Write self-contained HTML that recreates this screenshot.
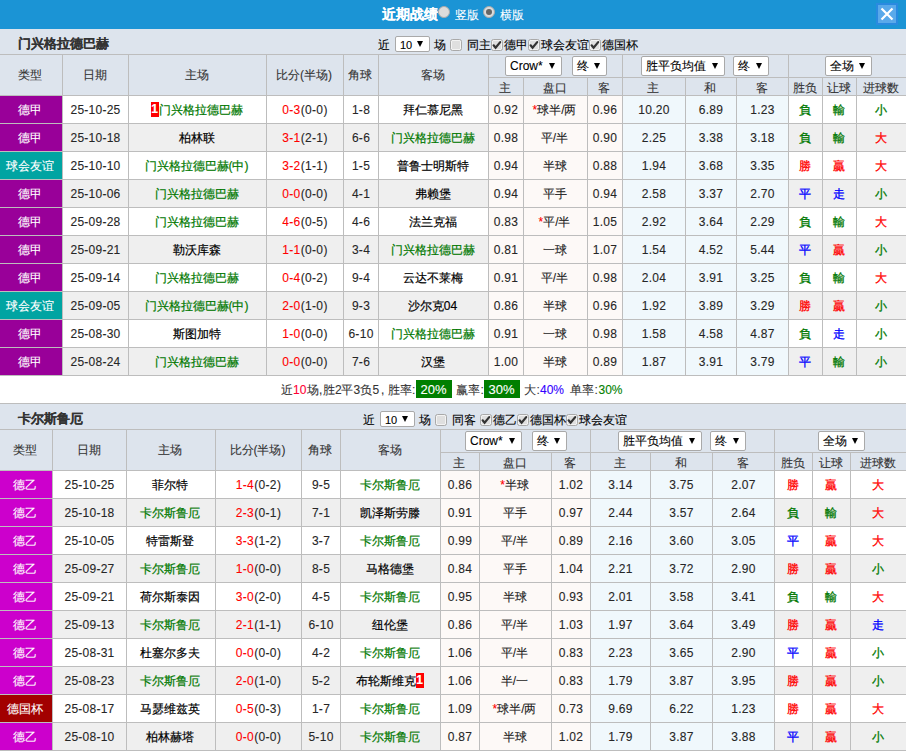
<!DOCTYPE html>
<html><head><meta charset="utf-8"><style>
html,body{margin:0;padding:0;background:#fff;width:906px;height:752px;overflow:hidden}
body{position:relative;font-family:"Liberation Sans",sans-serif;font-size:12px;color:#000;-webkit-text-stroke:0.1px currentColor}
body div{position:absolute;box-sizing:border-box}
.t{text-align:center;white-space:nowrap}
.ct{white-space:nowrap;line-height:14px}
.bd{position:relative;top:-1px;display:inline-block;background:#f00;color:#fff;font-weight:bold;width:8px;height:15px;line-height:15px;text-align:center;vertical-align:middle;font-size:12px}
.sel{position:absolute;background:#fff;border:1px solid #a9a9a9;border-radius:2px;text-align:left;padding-left:4px;white-space:nowrap;color:#000;font-size:12px}
.sel2{position:absolute;background:#fff;border:1px solid #a9a9a9;border-radius:2px;padding-left:4px;white-space:nowrap;color:#000;font-size:12px}
.arr{position:absolute;right:6px;top:50%;margin-top:-3px;width:0;height:0;border-left:3px solid transparent;border-right:3px solid transparent;border-top:6px solid #000}
.cb{width:12px;height:12px;border:1px solid #a9a9a9;border-radius:2.5px;background:#dfdfdf;box-shadow:inset 0 0 0 1px #f3f3f3}
.cb svg{position:absolute;left:-1px;top:-1px}
.rad{width:12px;height:12px;border-radius:50%;background:#dcdcdc;border:1px solid #aaa;box-sizing:border-box}
.dot{left:2px;top:2px;width:6px;height:6px;border-radius:50%;background:#666}
.gb{display:inline-block;background:#007f00;color:#fff;padding:0 4px;line-height:18px;font-size:13px}
</style></head><body>
<div style="left:0px;top:0px;width:906px;height:29px;background:#1b94d5"></div>
<div class="ct" style="left:382px;top:7px;font-size:14px;font-weight:bold;color:#fff">近期战绩</div>
<div class="rad" style="left:438px;top:6px"></div>
<div class="ct" style="left:455px;top:8px;color:#fff">竖版</div>
<div class="rad" style="left:483px;top:6px"><div class="dot"></div></div>
<div class="ct" style="left:500px;top:8px;color:#fff">横版</div>
<div style="left:876px;top:3px;width:22px;height:22px;background:#2a8ae0"></div>
<div style="left:878px;top:5px;width:18px;height:18px;background:#5aa9ea"></div>
<svg style="position:absolute;left:876px;top:3px" width="22" height="22" viewBox="0 0 22 22"><path d="M5.5 5.5 L16.5 16.5 M16.5 5.5 L5.5 16.5" stroke="#fff" stroke-width="2.2"/></svg>
<div style="left:0px;top:29px;width:906px;height:25px;background:#dde4ed"></div>
<div class="t" style="left:18px;top:31px;width:282px;height:25px;line-height:25px;text-align:left;font-weight:bold;font-size:13px;color:#333">门兴格拉德巴赫</div>
<div class="ct" style="left:378px;top:38px">近</div>
<div class="sel2" style="left:395px;top:36px;width:35px;height:16px;line-height:16px;font-size:11px">10<i class="arr"></i></div>
<div class="ct" style="left:433.5px;top:38px">场</div>
<div class="cb" style="left:450px;top:39px"></div>
<div class="ct" style="left:467px;top:38px">同主</div>
<div class="cb" style="left:491px;top:39px"><svg width="12" height="12" viewBox="0 0 12 12"><path d="M2.6 6.3 L4.6 8.7 L9.2 3.1" stroke="#333" stroke-width="2.2" fill="none" stroke-linecap="round"/></svg></div>
<div class="ct" style="left:503.5px;top:38px">德甲</div>
<div class="cb" style="left:528px;top:39px"><svg width="12" height="12" viewBox="0 0 12 12"><path d="M2.6 6.3 L4.6 8.7 L9.2 3.1" stroke="#333" stroke-width="2.2" fill="none" stroke-linecap="round"/></svg></div>
<div class="ct" style="left:540.5px;top:38px">球会友谊</div>
<div class="cb" style="left:589px;top:39px"><svg width="12" height="12" viewBox="0 0 12 12"><path d="M2.6 6.3 L4.6 8.7 L9.2 3.1" stroke="#333" stroke-width="2.2" fill="none" stroke-linecap="round"/></svg></div>
<div class="ct" style="left:601.5px;top:38px">德国杯</div>
<div style="left:0px;top:54px;width:906px;height:41px;background:#dde4ed"></div>
<div style="left:0px;top:95px;width:906px;height:28px;background:#ffffff"></div>
<div style="left:488px;top:95px;width:134px;height:28px;background:#fdf9f7"></div>
<div style="left:622px;top:95px;width:166px;height:28px;background:#f0f8fc"></div>
<div style="left:0px;top:96px;width:62px;height:27px;background:#990099"></div>
<div class="t" style="left:-1px;top:97px;width:62px;height:27px;line-height:27px;color:#fff">德甲</div>
<div class="t" style="left:63px;top:97px;width:65px;height:27px;line-height:27px;color:#262626;letter-spacing:0.25px">25-10-25</div>
<div class="t" style="left:128px;top:97px;width:137px;height:27px;line-height:27px;"><span style="color:#007800;-webkit-text-stroke:0.2px currentColor"><span class="bd">1</span>门兴格拉德巴赫</span></div>
<div class="t" style="left:267px;top:97px;width:76px;height:27px;line-height:27px;letter-spacing:0.35px"><span style="color:#ff0000">0-3</span><span style="color:#262626">(0-0)</span></div>
<div class="t" style="left:344px;top:97px;width:34px;height:27px;line-height:27px;color:#262626;letter-spacing:0.3px">1-8</div>
<div class="t" style="left:378px;top:97px;width:109px;height:27px;line-height:27px;"><span style="color:#000;-webkit-text-stroke:0.2px currentColor">拜仁慕尼黑</span></div>
<div class="t" style="left:489px;top:97px;width:34px;height:27px;line-height:27px;color:#262626;letter-spacing:0.3px">0.92</div>
<div class="t" style="left:523px;top:97px;width:63px;height:27px;line-height:27px;color:#222"><span style="color:#ff0000">*</span>球半/两</div>
<div class="t" style="left:588px;top:97px;width:34px;height:27px;line-height:27px;color:#262626;letter-spacing:0.3px">0.96</div>
<div class="t" style="left:623px;top:97px;width:62px;height:27px;line-height:27px;color:#262626;letter-spacing:0.3px">10.20</div>
<div class="t" style="left:686px;top:97px;width:50px;height:27px;line-height:27px;color:#262626;letter-spacing:0.3px">6.89</div>
<div class="t" style="left:737px;top:97px;width:51px;height:27px;line-height:27px;color:#262626;letter-spacing:0.3px">1.23</div>
<div class="t" style="left:788px;top:97px;width:33px;height:27px;line-height:27px;color:#007800;-webkit-text-stroke:0.3px currentColor">負</div>
<div class="t" style="left:822px;top:97px;width:33px;height:27px;line-height:27px;color:#007800;-webkit-text-stroke:0.3px currentColor">輸</div>
<div class="t" style="left:856px;top:97px;width:49px;height:27px;line-height:27px;color:#007800;-webkit-text-stroke:0.3px currentColor">小</div>
<div style="left:0px;top:123px;width:906px;height:28px;background:#efefef"></div>
<div style="left:488px;top:123px;width:134px;height:28px;background:#fdf9f7"></div>
<div style="left:622px;top:123px;width:166px;height:28px;background:#f0f8fc"></div>
<div style="left:0px;top:124px;width:62px;height:27px;background:#990099"></div>
<div class="t" style="left:-1px;top:125px;width:62px;height:27px;line-height:27px;color:#fff">德甲</div>
<div class="t" style="left:63px;top:125px;width:65px;height:27px;line-height:27px;color:#262626;letter-spacing:0.25px">25-10-18</div>
<div class="t" style="left:128px;top:125px;width:137px;height:27px;line-height:27px;"><span style="color:#000;-webkit-text-stroke:0.2px currentColor">柏林联</span></div>
<div class="t" style="left:267px;top:125px;width:76px;height:27px;line-height:27px;letter-spacing:0.35px"><span style="color:#ff0000">3-1</span><span style="color:#262626">(2-1)</span></div>
<div class="t" style="left:344px;top:125px;width:34px;height:27px;line-height:27px;color:#262626;letter-spacing:0.3px">6-6</div>
<div class="t" style="left:378px;top:125px;width:109px;height:27px;line-height:27px;"><span style="color:#007800;-webkit-text-stroke:0.2px currentColor">门兴格拉德巴赫</span></div>
<div class="t" style="left:489px;top:125px;width:34px;height:27px;line-height:27px;color:#262626;letter-spacing:0.3px">0.98</div>
<div class="t" style="left:523px;top:125px;width:63px;height:27px;line-height:27px;color:#222">平/半</div>
<div class="t" style="left:588px;top:125px;width:34px;height:27px;line-height:27px;color:#262626;letter-spacing:0.3px">0.90</div>
<div class="t" style="left:623px;top:125px;width:62px;height:27px;line-height:27px;color:#262626;letter-spacing:0.3px">2.25</div>
<div class="t" style="left:686px;top:125px;width:50px;height:27px;line-height:27px;color:#262626;letter-spacing:0.3px">3.38</div>
<div class="t" style="left:737px;top:125px;width:51px;height:27px;line-height:27px;color:#262626;letter-spacing:0.3px">3.18</div>
<div class="t" style="left:788px;top:125px;width:33px;height:27px;line-height:27px;color:#007800;-webkit-text-stroke:0.3px currentColor">負</div>
<div class="t" style="left:822px;top:125px;width:33px;height:27px;line-height:27px;color:#007800;-webkit-text-stroke:0.3px currentColor">輸</div>
<div class="t" style="left:856px;top:125px;width:49px;height:27px;line-height:27px;color:#ff0000;-webkit-text-stroke:0.3px currentColor">大</div>
<div style="left:0px;top:151px;width:906px;height:28px;background:#ffffff"></div>
<div style="left:488px;top:151px;width:134px;height:28px;background:#fdf9f7"></div>
<div style="left:622px;top:151px;width:166px;height:28px;background:#f0f8fc"></div>
<div style="left:0px;top:152px;width:62px;height:27px;background:#00a4a2"></div>
<div class="t" style="left:-1px;top:153px;width:62px;height:27px;line-height:27px;color:#fff">球会友谊</div>
<div class="t" style="left:63px;top:153px;width:65px;height:27px;line-height:27px;color:#262626;letter-spacing:0.25px">25-10-10</div>
<div class="t" style="left:128px;top:153px;width:137px;height:27px;line-height:27px;"><span style="color:#007800;-webkit-text-stroke:0.2px currentColor">门兴格拉德巴赫(中)</span></div>
<div class="t" style="left:267px;top:153px;width:76px;height:27px;line-height:27px;letter-spacing:0.35px"><span style="color:#ff0000">3-2</span><span style="color:#262626">(1-1)</span></div>
<div class="t" style="left:344px;top:153px;width:34px;height:27px;line-height:27px;color:#262626;letter-spacing:0.3px">1-5</div>
<div class="t" style="left:378px;top:153px;width:109px;height:27px;line-height:27px;"><span style="color:#000;-webkit-text-stroke:0.2px currentColor">普鲁士明斯特</span></div>
<div class="t" style="left:489px;top:153px;width:34px;height:27px;line-height:27px;color:#262626;letter-spacing:0.3px">0.94</div>
<div class="t" style="left:523px;top:153px;width:63px;height:27px;line-height:27px;color:#222">半球</div>
<div class="t" style="left:588px;top:153px;width:34px;height:27px;line-height:27px;color:#262626;letter-spacing:0.3px">0.88</div>
<div class="t" style="left:623px;top:153px;width:62px;height:27px;line-height:27px;color:#262626;letter-spacing:0.3px">1.94</div>
<div class="t" style="left:686px;top:153px;width:50px;height:27px;line-height:27px;color:#262626;letter-spacing:0.3px">3.68</div>
<div class="t" style="left:737px;top:153px;width:51px;height:27px;line-height:27px;color:#262626;letter-spacing:0.3px">3.35</div>
<div class="t" style="left:788px;top:153px;width:33px;height:27px;line-height:27px;color:#ff0000;-webkit-text-stroke:0.3px currentColor">勝</div>
<div class="t" style="left:822px;top:153px;width:33px;height:27px;line-height:27px;color:#ff0000;-webkit-text-stroke:0.3px currentColor">贏</div>
<div class="t" style="left:856px;top:153px;width:49px;height:27px;line-height:27px;color:#ff0000;-webkit-text-stroke:0.3px currentColor">大</div>
<div style="left:0px;top:179px;width:906px;height:28px;background:#efefef"></div>
<div style="left:488px;top:179px;width:134px;height:28px;background:#fdf9f7"></div>
<div style="left:622px;top:179px;width:166px;height:28px;background:#f0f8fc"></div>
<div style="left:0px;top:180px;width:62px;height:27px;background:#990099"></div>
<div class="t" style="left:-1px;top:181px;width:62px;height:27px;line-height:27px;color:#fff">德甲</div>
<div class="t" style="left:63px;top:181px;width:65px;height:27px;line-height:27px;color:#262626;letter-spacing:0.25px">25-10-06</div>
<div class="t" style="left:128px;top:181px;width:137px;height:27px;line-height:27px;"><span style="color:#007800;-webkit-text-stroke:0.2px currentColor">门兴格拉德巴赫</span></div>
<div class="t" style="left:267px;top:181px;width:76px;height:27px;line-height:27px;letter-spacing:0.35px"><span style="color:#ff0000">0-0</span><span style="color:#262626">(0-0)</span></div>
<div class="t" style="left:344px;top:181px;width:34px;height:27px;line-height:27px;color:#262626;letter-spacing:0.3px">4-1</div>
<div class="t" style="left:378px;top:181px;width:109px;height:27px;line-height:27px;"><span style="color:#000;-webkit-text-stroke:0.2px currentColor">弗赖堡</span></div>
<div class="t" style="left:489px;top:181px;width:34px;height:27px;line-height:27px;color:#262626;letter-spacing:0.3px">0.94</div>
<div class="t" style="left:523px;top:181px;width:63px;height:27px;line-height:27px;color:#222">平手</div>
<div class="t" style="left:588px;top:181px;width:34px;height:27px;line-height:27px;color:#262626;letter-spacing:0.3px">0.94</div>
<div class="t" style="left:623px;top:181px;width:62px;height:27px;line-height:27px;color:#262626;letter-spacing:0.3px">2.58</div>
<div class="t" style="left:686px;top:181px;width:50px;height:27px;line-height:27px;color:#262626;letter-spacing:0.3px">3.37</div>
<div class="t" style="left:737px;top:181px;width:51px;height:27px;line-height:27px;color:#262626;letter-spacing:0.3px">2.70</div>
<div class="t" style="left:788px;top:181px;width:33px;height:27px;line-height:27px;color:#0000ff;-webkit-text-stroke:0.3px currentColor">平</div>
<div class="t" style="left:822px;top:181px;width:33px;height:27px;line-height:27px;color:#0000ff;-webkit-text-stroke:0.3px currentColor">走</div>
<div class="t" style="left:856px;top:181px;width:49px;height:27px;line-height:27px;color:#007800;-webkit-text-stroke:0.3px currentColor">小</div>
<div style="left:0px;top:207px;width:906px;height:28px;background:#ffffff"></div>
<div style="left:488px;top:207px;width:134px;height:28px;background:#fdf9f7"></div>
<div style="left:622px;top:207px;width:166px;height:28px;background:#f0f8fc"></div>
<div style="left:0px;top:208px;width:62px;height:27px;background:#990099"></div>
<div class="t" style="left:-1px;top:209px;width:62px;height:27px;line-height:27px;color:#fff">德甲</div>
<div class="t" style="left:63px;top:209px;width:65px;height:27px;line-height:27px;color:#262626;letter-spacing:0.25px">25-09-28</div>
<div class="t" style="left:128px;top:209px;width:137px;height:27px;line-height:27px;"><span style="color:#007800;-webkit-text-stroke:0.2px currentColor">门兴格拉德巴赫</span></div>
<div class="t" style="left:267px;top:209px;width:76px;height:27px;line-height:27px;letter-spacing:0.35px"><span style="color:#ff0000">4-6</span><span style="color:#262626">(0-5)</span></div>
<div class="t" style="left:344px;top:209px;width:34px;height:27px;line-height:27px;color:#262626;letter-spacing:0.3px">4-6</div>
<div class="t" style="left:378px;top:209px;width:109px;height:27px;line-height:27px;"><span style="color:#000;-webkit-text-stroke:0.2px currentColor">法兰克福</span></div>
<div class="t" style="left:489px;top:209px;width:34px;height:27px;line-height:27px;color:#262626;letter-spacing:0.3px">0.83</div>
<div class="t" style="left:523px;top:209px;width:63px;height:27px;line-height:27px;color:#222"><span style="color:#ff0000">*</span>平/半</div>
<div class="t" style="left:588px;top:209px;width:34px;height:27px;line-height:27px;color:#262626;letter-spacing:0.3px">1.05</div>
<div class="t" style="left:623px;top:209px;width:62px;height:27px;line-height:27px;color:#262626;letter-spacing:0.3px">2.92</div>
<div class="t" style="left:686px;top:209px;width:50px;height:27px;line-height:27px;color:#262626;letter-spacing:0.3px">3.64</div>
<div class="t" style="left:737px;top:209px;width:51px;height:27px;line-height:27px;color:#262626;letter-spacing:0.3px">2.29</div>
<div class="t" style="left:788px;top:209px;width:33px;height:27px;line-height:27px;color:#007800;-webkit-text-stroke:0.3px currentColor">負</div>
<div class="t" style="left:822px;top:209px;width:33px;height:27px;line-height:27px;color:#007800;-webkit-text-stroke:0.3px currentColor">輸</div>
<div class="t" style="left:856px;top:209px;width:49px;height:27px;line-height:27px;color:#ff0000;-webkit-text-stroke:0.3px currentColor">大</div>
<div style="left:0px;top:235px;width:906px;height:28px;background:#efefef"></div>
<div style="left:488px;top:235px;width:134px;height:28px;background:#fdf9f7"></div>
<div style="left:622px;top:235px;width:166px;height:28px;background:#f0f8fc"></div>
<div style="left:0px;top:236px;width:62px;height:27px;background:#990099"></div>
<div class="t" style="left:-1px;top:237px;width:62px;height:27px;line-height:27px;color:#fff">德甲</div>
<div class="t" style="left:63px;top:237px;width:65px;height:27px;line-height:27px;color:#262626;letter-spacing:0.25px">25-09-21</div>
<div class="t" style="left:128px;top:237px;width:137px;height:27px;line-height:27px;"><span style="color:#000;-webkit-text-stroke:0.2px currentColor">勒沃库森</span></div>
<div class="t" style="left:267px;top:237px;width:76px;height:27px;line-height:27px;letter-spacing:0.35px"><span style="color:#ff0000">1-1</span><span style="color:#262626">(0-0)</span></div>
<div class="t" style="left:344px;top:237px;width:34px;height:27px;line-height:27px;color:#262626;letter-spacing:0.3px">3-4</div>
<div class="t" style="left:378px;top:237px;width:109px;height:27px;line-height:27px;"><span style="color:#007800;-webkit-text-stroke:0.2px currentColor">门兴格拉德巴赫</span></div>
<div class="t" style="left:489px;top:237px;width:34px;height:27px;line-height:27px;color:#262626;letter-spacing:0.3px">0.81</div>
<div class="t" style="left:523px;top:237px;width:63px;height:27px;line-height:27px;color:#222">一球</div>
<div class="t" style="left:588px;top:237px;width:34px;height:27px;line-height:27px;color:#262626;letter-spacing:0.3px">1.07</div>
<div class="t" style="left:623px;top:237px;width:62px;height:27px;line-height:27px;color:#262626;letter-spacing:0.3px">1.54</div>
<div class="t" style="left:686px;top:237px;width:50px;height:27px;line-height:27px;color:#262626;letter-spacing:0.3px">4.52</div>
<div class="t" style="left:737px;top:237px;width:51px;height:27px;line-height:27px;color:#262626;letter-spacing:0.3px">5.44</div>
<div class="t" style="left:788px;top:237px;width:33px;height:27px;line-height:27px;color:#0000ff;-webkit-text-stroke:0.3px currentColor">平</div>
<div class="t" style="left:822px;top:237px;width:33px;height:27px;line-height:27px;color:#ff0000;-webkit-text-stroke:0.3px currentColor">贏</div>
<div class="t" style="left:856px;top:237px;width:49px;height:27px;line-height:27px;color:#007800;-webkit-text-stroke:0.3px currentColor">小</div>
<div style="left:0px;top:263px;width:906px;height:28px;background:#ffffff"></div>
<div style="left:488px;top:263px;width:134px;height:28px;background:#fdf9f7"></div>
<div style="left:622px;top:263px;width:166px;height:28px;background:#f0f8fc"></div>
<div style="left:0px;top:264px;width:62px;height:27px;background:#990099"></div>
<div class="t" style="left:-1px;top:265px;width:62px;height:27px;line-height:27px;color:#fff">德甲</div>
<div class="t" style="left:63px;top:265px;width:65px;height:27px;line-height:27px;color:#262626;letter-spacing:0.25px">25-09-14</div>
<div class="t" style="left:128px;top:265px;width:137px;height:27px;line-height:27px;"><span style="color:#007800;-webkit-text-stroke:0.2px currentColor">门兴格拉德巴赫</span></div>
<div class="t" style="left:267px;top:265px;width:76px;height:27px;line-height:27px;letter-spacing:0.35px"><span style="color:#ff0000">0-4</span><span style="color:#262626">(0-2)</span></div>
<div class="t" style="left:344px;top:265px;width:34px;height:27px;line-height:27px;color:#262626;letter-spacing:0.3px">9-4</div>
<div class="t" style="left:378px;top:265px;width:109px;height:27px;line-height:27px;"><span style="color:#000;-webkit-text-stroke:0.2px currentColor">云达不莱梅</span></div>
<div class="t" style="left:489px;top:265px;width:34px;height:27px;line-height:27px;color:#262626;letter-spacing:0.3px">0.91</div>
<div class="t" style="left:523px;top:265px;width:63px;height:27px;line-height:27px;color:#222">平/半</div>
<div class="t" style="left:588px;top:265px;width:34px;height:27px;line-height:27px;color:#262626;letter-spacing:0.3px">0.98</div>
<div class="t" style="left:623px;top:265px;width:62px;height:27px;line-height:27px;color:#262626;letter-spacing:0.3px">2.04</div>
<div class="t" style="left:686px;top:265px;width:50px;height:27px;line-height:27px;color:#262626;letter-spacing:0.3px">3.91</div>
<div class="t" style="left:737px;top:265px;width:51px;height:27px;line-height:27px;color:#262626;letter-spacing:0.3px">3.25</div>
<div class="t" style="left:788px;top:265px;width:33px;height:27px;line-height:27px;color:#007800;-webkit-text-stroke:0.3px currentColor">負</div>
<div class="t" style="left:822px;top:265px;width:33px;height:27px;line-height:27px;color:#007800;-webkit-text-stroke:0.3px currentColor">輸</div>
<div class="t" style="left:856px;top:265px;width:49px;height:27px;line-height:27px;color:#ff0000;-webkit-text-stroke:0.3px currentColor">大</div>
<div style="left:0px;top:291px;width:906px;height:28px;background:#efefef"></div>
<div style="left:488px;top:291px;width:134px;height:28px;background:#fdf9f7"></div>
<div style="left:622px;top:291px;width:166px;height:28px;background:#f0f8fc"></div>
<div style="left:0px;top:292px;width:62px;height:27px;background:#00a4a2"></div>
<div class="t" style="left:-1px;top:293px;width:62px;height:27px;line-height:27px;color:#fff">球会友谊</div>
<div class="t" style="left:63px;top:293px;width:65px;height:27px;line-height:27px;color:#262626;letter-spacing:0.25px">25-09-05</div>
<div class="t" style="left:128px;top:293px;width:137px;height:27px;line-height:27px;"><span style="color:#007800;-webkit-text-stroke:0.2px currentColor">门兴格拉德巴赫(中)</span></div>
<div class="t" style="left:267px;top:293px;width:76px;height:27px;line-height:27px;letter-spacing:0.35px"><span style="color:#ff0000">2-0</span><span style="color:#262626">(1-0)</span></div>
<div class="t" style="left:344px;top:293px;width:34px;height:27px;line-height:27px;color:#262626;letter-spacing:0.3px">9-3</div>
<div class="t" style="left:378px;top:293px;width:109px;height:27px;line-height:27px;"><span style="color:#000;-webkit-text-stroke:0.2px currentColor">沙尔克04</span></div>
<div class="t" style="left:489px;top:293px;width:34px;height:27px;line-height:27px;color:#262626;letter-spacing:0.3px">0.86</div>
<div class="t" style="left:523px;top:293px;width:63px;height:27px;line-height:27px;color:#222">半球</div>
<div class="t" style="left:588px;top:293px;width:34px;height:27px;line-height:27px;color:#262626;letter-spacing:0.3px">0.96</div>
<div class="t" style="left:623px;top:293px;width:62px;height:27px;line-height:27px;color:#262626;letter-spacing:0.3px">1.92</div>
<div class="t" style="left:686px;top:293px;width:50px;height:27px;line-height:27px;color:#262626;letter-spacing:0.3px">3.89</div>
<div class="t" style="left:737px;top:293px;width:51px;height:27px;line-height:27px;color:#262626;letter-spacing:0.3px">3.29</div>
<div class="t" style="left:788px;top:293px;width:33px;height:27px;line-height:27px;color:#ff0000;-webkit-text-stroke:0.3px currentColor">勝</div>
<div class="t" style="left:822px;top:293px;width:33px;height:27px;line-height:27px;color:#ff0000;-webkit-text-stroke:0.3px currentColor">贏</div>
<div class="t" style="left:856px;top:293px;width:49px;height:27px;line-height:27px;color:#007800;-webkit-text-stroke:0.3px currentColor">小</div>
<div style="left:0px;top:319px;width:906px;height:28px;background:#ffffff"></div>
<div style="left:488px;top:319px;width:134px;height:28px;background:#fdf9f7"></div>
<div style="left:622px;top:319px;width:166px;height:28px;background:#f0f8fc"></div>
<div style="left:0px;top:320px;width:62px;height:27px;background:#990099"></div>
<div class="t" style="left:-1px;top:321px;width:62px;height:27px;line-height:27px;color:#fff">德甲</div>
<div class="t" style="left:63px;top:321px;width:65px;height:27px;line-height:27px;color:#262626;letter-spacing:0.25px">25-08-30</div>
<div class="t" style="left:128px;top:321px;width:137px;height:27px;line-height:27px;"><span style="color:#000;-webkit-text-stroke:0.2px currentColor">斯图加特</span></div>
<div class="t" style="left:267px;top:321px;width:76px;height:27px;line-height:27px;letter-spacing:0.35px"><span style="color:#ff0000">1-0</span><span style="color:#262626">(0-0)</span></div>
<div class="t" style="left:344px;top:321px;width:34px;height:27px;line-height:27px;color:#262626;letter-spacing:0.3px">6-10</div>
<div class="t" style="left:378px;top:321px;width:109px;height:27px;line-height:27px;"><span style="color:#007800;-webkit-text-stroke:0.2px currentColor">门兴格拉德巴赫</span></div>
<div class="t" style="left:489px;top:321px;width:34px;height:27px;line-height:27px;color:#262626;letter-spacing:0.3px">0.91</div>
<div class="t" style="left:523px;top:321px;width:63px;height:27px;line-height:27px;color:#222">一球</div>
<div class="t" style="left:588px;top:321px;width:34px;height:27px;line-height:27px;color:#262626;letter-spacing:0.3px">0.98</div>
<div class="t" style="left:623px;top:321px;width:62px;height:27px;line-height:27px;color:#262626;letter-spacing:0.3px">1.58</div>
<div class="t" style="left:686px;top:321px;width:50px;height:27px;line-height:27px;color:#262626;letter-spacing:0.3px">4.58</div>
<div class="t" style="left:737px;top:321px;width:51px;height:27px;line-height:27px;color:#262626;letter-spacing:0.3px">4.87</div>
<div class="t" style="left:788px;top:321px;width:33px;height:27px;line-height:27px;color:#007800;-webkit-text-stroke:0.3px currentColor">負</div>
<div class="t" style="left:822px;top:321px;width:33px;height:27px;line-height:27px;color:#0000ff;-webkit-text-stroke:0.3px currentColor">走</div>
<div class="t" style="left:856px;top:321px;width:49px;height:27px;line-height:27px;color:#007800;-webkit-text-stroke:0.3px currentColor">小</div>
<div style="left:0px;top:347px;width:906px;height:28px;background:#efefef"></div>
<div style="left:488px;top:347px;width:134px;height:28px;background:#fdf9f7"></div>
<div style="left:622px;top:347px;width:166px;height:28px;background:#f0f8fc"></div>
<div style="left:0px;top:348px;width:62px;height:27px;background:#990099"></div>
<div class="t" style="left:-1px;top:349px;width:62px;height:27px;line-height:27px;color:#fff">德甲</div>
<div class="t" style="left:63px;top:349px;width:65px;height:27px;line-height:27px;color:#262626;letter-spacing:0.25px">25-08-24</div>
<div class="t" style="left:128px;top:349px;width:137px;height:27px;line-height:27px;"><span style="color:#007800;-webkit-text-stroke:0.2px currentColor">门兴格拉德巴赫</span></div>
<div class="t" style="left:267px;top:349px;width:76px;height:27px;line-height:27px;letter-spacing:0.35px"><span style="color:#ff0000">0-0</span><span style="color:#262626">(0-0)</span></div>
<div class="t" style="left:344px;top:349px;width:34px;height:27px;line-height:27px;color:#262626;letter-spacing:0.3px">7-6</div>
<div class="t" style="left:378px;top:349px;width:109px;height:27px;line-height:27px;"><span style="color:#000;-webkit-text-stroke:0.2px currentColor">汉堡</span></div>
<div class="t" style="left:489px;top:349px;width:34px;height:27px;line-height:27px;color:#262626;letter-spacing:0.3px">1.00</div>
<div class="t" style="left:523px;top:349px;width:63px;height:27px;line-height:27px;color:#222">半球</div>
<div class="t" style="left:588px;top:349px;width:34px;height:27px;line-height:27px;color:#262626;letter-spacing:0.3px">0.89</div>
<div class="t" style="left:623px;top:349px;width:62px;height:27px;line-height:27px;color:#262626;letter-spacing:0.3px">1.87</div>
<div class="t" style="left:686px;top:349px;width:50px;height:27px;line-height:27px;color:#262626;letter-spacing:0.3px">3.91</div>
<div class="t" style="left:737px;top:349px;width:51px;height:27px;line-height:27px;color:#262626;letter-spacing:0.3px">3.79</div>
<div class="t" style="left:788px;top:349px;width:33px;height:27px;line-height:27px;color:#0000ff;-webkit-text-stroke:0.3px currentColor">平</div>
<div class="t" style="left:822px;top:349px;width:33px;height:27px;line-height:27px;color:#007800;-webkit-text-stroke:0.3px currentColor">輸</div>
<div class="t" style="left:856px;top:349px;width:49px;height:27px;line-height:27px;color:#007800;-webkit-text-stroke:0.3px currentColor">小</div>
<div class="t" style="left:-1px;top:55px;width:62px;height:40px;line-height:40px;color:#333">类型</div>
<div class="t" style="left:62px;top:55px;width:65px;height:40px;line-height:40px;color:#333">日期</div>
<div class="t" style="left:128px;top:55px;width:137px;height:40px;line-height:40px;color:#333">主场</div>
<div class="t" style="left:266px;top:55px;width:76px;height:40px;line-height:40px;color:#333">比分(半场)</div>
<div class="t" style="left:343px;top:55px;width:34px;height:40px;line-height:40px;color:#333">角球</div>
<div class="t" style="left:378px;top:55px;width:109px;height:40px;line-height:40px;color:#333">客场</div>
<div class="t" style="left:488px;top:80px;width:34px;height:17px;line-height:17px;color:#333">主</div>
<div class="t" style="left:523px;top:80px;width:63px;height:17px;line-height:17px;color:#333">盘口</div>
<div class="t" style="left:587px;top:80px;width:34px;height:17px;line-height:17px;color:#333">客</div>
<div class="t" style="left:622px;top:80px;width:62px;height:17px;line-height:17px;color:#333">主</div>
<div class="t" style="left:685px;top:80px;width:50px;height:17px;line-height:17px;color:#333">和</div>
<div class="t" style="left:736px;top:80px;width:51px;height:17px;line-height:17px;color:#333">客</div>
<div class="t" style="left:788px;top:80px;width:33px;height:17px;line-height:17px;color:#333">胜负</div>
<div class="t" style="left:822px;top:80px;width:33px;height:17px;line-height:17px;color:#333">让球</div>
<div class="t" style="left:856px;top:80px;width:49px;height:17px;line-height:17px;color:#333">进球数</div>
<div class="sel" style="left:505px;top:56px;width:57px;height:20px;line-height:18px">Crow*<i class="arr"></i></div>
<div class="sel" style="left:572px;top:56px;width:35px;height:20px;line-height:18px">终<i class="arr"></i></div>
<div class="sel" style="left:641px;top:56px;width:84px;height:20px;line-height:18px">胜平负均值<i class="arr"></i></div>
<div class="sel" style="left:733px;top:56px;width:36px;height:20px;line-height:18px">终<i class="arr"></i></div>
<div class="sel" style="left:825px;top:56px;width:47px;height:20px;line-height:18px">全场<i class="arr"></i></div>
<div style="left:0px;top:54px;width:906px;height:1px;background:#bdbdbd"></div>
<div style="left:0px;top:95px;width:906px;height:1px;background:#bdbdbd"></div>
<div style="left:488px;top:77px;width:418px;height:1px;background:#bdbdbd"></div>
<div style="left:0px;top:123px;width:906px;height:1px;background:#bdbdbd"></div>
<div style="left:0px;top:151px;width:906px;height:1px;background:#bdbdbd"></div>
<div style="left:0px;top:179px;width:906px;height:1px;background:#bdbdbd"></div>
<div style="left:0px;top:207px;width:906px;height:1px;background:#bdbdbd"></div>
<div style="left:0px;top:235px;width:906px;height:1px;background:#bdbdbd"></div>
<div style="left:0px;top:263px;width:906px;height:1px;background:#bdbdbd"></div>
<div style="left:0px;top:291px;width:906px;height:1px;background:#bdbdbd"></div>
<div style="left:0px;top:319px;width:906px;height:1px;background:#bdbdbd"></div>
<div style="left:0px;top:347px;width:906px;height:1px;background:#bdbdbd"></div>
<div style="left:0px;top:375px;width:906px;height:1px;background:#bdbdbd"></div>
<div style="left:62px;top:54px;width:1px;height:322px;background:#bdbdbd"></div>
<div style="left:128px;top:54px;width:1px;height:322px;background:#bdbdbd"></div>
<div style="left:266px;top:54px;width:1px;height:322px;background:#bdbdbd"></div>
<div style="left:343px;top:54px;width:1px;height:322px;background:#bdbdbd"></div>
<div style="left:378px;top:54px;width:1px;height:322px;background:#bdbdbd"></div>
<div style="left:488px;top:54px;width:1px;height:322px;background:#bdbdbd"></div>
<div style="left:622px;top:54px;width:1px;height:322px;background:#bdbdbd"></div>
<div style="left:788px;top:54px;width:1px;height:322px;background:#bdbdbd"></div>
<div style="left:523px;top:77px;width:1px;height:299px;background:#bdbdbd"></div>
<div style="left:587px;top:77px;width:1px;height:299px;background:#bdbdbd"></div>
<div style="left:685px;top:77px;width:1px;height:299px;background:#bdbdbd"></div>
<div style="left:736px;top:77px;width:1px;height:299px;background:#bdbdbd"></div>
<div style="left:822px;top:77px;width:1px;height:299px;background:#bdbdbd"></div>
<div style="left:856px;top:77px;width:1px;height:299px;background:#bdbdbd"></div>
<div class="ct" style="left:280.5px;top:383px;color:#333">近</div>
<div class="ct" style="left:293px;top:383px;color:#ff0033">10</div>
<div class="ct" style="left:306.5px;top:383px;color:#333">场</div>
<div class="ct" style="left:319px;top:383px;color:#333">,</div>
<div class="ct" style="left:322.5px;top:383px;color:#333">胜</div>
<div class="ct" style="left:335px;top:383px;color:#333">2</div>
<div class="ct" style="left:341px;top:383px;color:#333">平</div>
<div class="ct" style="left:353.5px;top:383px;color:#333">3</div>
<div class="ct" style="left:359.5px;top:383px;color:#333">负</div>
<div class="ct" style="left:372.5px;top:383px;color:#333">5</div>
<div class="ct" style="left:381px;top:383px;color:#333">,</div>
<div class="ct" style="left:387.5px;top:383px;color:#333">胜率</div>
<div class="ct" style="left:412px;top:383px;color:#333">:</div>
<div style="left:416px;top:380px;width:36px;height:18px;background:#007f00"></div>
<div style="left:484px;top:380px;width:36px;height:18px;background:#007f00"></div>
<div class="ct" style="left:420.5px;top:383px;color:#fff"><span style="font-size:13px">20%</span></div>
<div class="ct" style="left:455.5px;top:383px;color:#333">赢率</div>
<div class="ct" style="left:480.5px;top:383px;color:#333">:</div>
<div class="ct" style="left:488.5px;top:383px;color:#fff"><span style="font-size:13px">30%</span></div>
<div class="ct" style="left:523.5px;top:383px;color:#333">大</div>
<div class="ct" style="left:536.5px;top:383px;color:#333">:</div>
<div class="ct" style="left:540px;top:383px;color:#3300ff">40%</div>
<div class="ct" style="left:569.5px;top:383px;color:#333">单率</div>
<div class="ct" style="left:594.5px;top:383px;color:#333">:</div>
<div class="ct" style="left:598.5px;top:383px;color:#008000">30%</div>
<div style="left:0px;top:403px;width:906px;height:1px;background:#bdbdbd"></div>
<div style="left:0px;top:404px;width:906px;height:25px;background:#dde4ed"></div>
<div class="t" style="left:18px;top:406px;width:282px;height:25px;line-height:25px;text-align:left;font-weight:bold;font-size:13px;color:#333">卡尔斯鲁厄</div>
<div class="ct" style="left:363px;top:413px">近</div>
<div class="sel2" style="left:380px;top:411px;width:35px;height:16px;line-height:16px;font-size:11px">10<i class="arr"></i></div>
<div class="ct" style="left:418.5px;top:413px">场</div>
<div class="cb" style="left:435px;top:414px"></div>
<div class="ct" style="left:452px;top:413px">同客</div>
<div class="cb" style="left:480px;top:414px"><svg width="12" height="12" viewBox="0 0 12 12"><path d="M2.6 6.3 L4.6 8.7 L9.2 3.1" stroke="#333" stroke-width="2.2" fill="none" stroke-linecap="round"/></svg></div>
<div class="ct" style="left:492.5px;top:413px">德乙</div>
<div class="cb" style="left:517px;top:414px"><svg width="12" height="12" viewBox="0 0 12 12"><path d="M2.6 6.3 L4.6 8.7 L9.2 3.1" stroke="#333" stroke-width="2.2" fill="none" stroke-linecap="round"/></svg></div>
<div class="ct" style="left:529.75px;top:413px">德国杯</div>
<div class="cb" style="left:566px;top:414px"><svg width="12" height="12" viewBox="0 0 12 12"><path d="M2.6 6.3 L4.6 8.7 L9.2 3.1" stroke="#333" stroke-width="2.2" fill="none" stroke-linecap="round"/></svg></div>
<div class="ct" style="left:578.5px;top:413px">球会友谊</div>
<div style="left:0px;top:429px;width:906px;height:41px;background:#dde4ed"></div>
<div style="left:0px;top:470px;width:906px;height:28px;background:#ffffff"></div>
<div style="left:440px;top:470px;width:150px;height:28px;background:#fdf9f7"></div>
<div style="left:590px;top:470px;width:184px;height:28px;background:#f0f8fc"></div>
<div style="left:0px;top:471px;width:52px;height:27px;background:#cc00cc"></div>
<div class="t" style="left:-1px;top:472px;width:52px;height:27px;line-height:27px;color:#fff">德乙</div>
<div class="t" style="left:53px;top:472px;width:73px;height:27px;line-height:27px;color:#262626;letter-spacing:0.25px">25-10-25</div>
<div class="t" style="left:126px;top:472px;width:88px;height:27px;line-height:27px;"><span style="color:#000;-webkit-text-stroke:0.2px currentColor">菲尔特</span></div>
<div class="t" style="left:216px;top:472px;width:85px;height:27px;line-height:27px;letter-spacing:0.35px"><span style="color:#ff0000">1-4</span><span style="color:#262626">(0-2)</span></div>
<div class="t" style="left:302px;top:472px;width:38px;height:27px;line-height:27px;color:#262626;letter-spacing:0.3px">9-5</div>
<div class="t" style="left:340px;top:472px;width:99px;height:27px;line-height:27px;"><span style="color:#007800;-webkit-text-stroke:0.2px currentColor">卡尔斯鲁厄</span></div>
<div class="t" style="left:441px;top:472px;width:38px;height:27px;line-height:27px;color:#262626;letter-spacing:0.3px">0.86</div>
<div class="t" style="left:479px;top:472px;width:71px;height:27px;line-height:27px;color:#222"><span style="color:#ff0000">*</span>半球</div>
<div class="t" style="left:552px;top:472px;width:38px;height:27px;line-height:27px;color:#262626;letter-spacing:0.3px">1.02</div>
<div class="t" style="left:591px;top:472px;width:59px;height:27px;line-height:27px;color:#262626;letter-spacing:0.3px">3.14</div>
<div class="t" style="left:651px;top:472px;width:61px;height:27px;line-height:27px;color:#262626;letter-spacing:0.3px">3.75</div>
<div class="t" style="left:713px;top:472px;width:61px;height:27px;line-height:27px;color:#262626;letter-spacing:0.3px">2.07</div>
<div class="t" style="left:774px;top:472px;width:37px;height:27px;line-height:27px;color:#ff0000;-webkit-text-stroke:0.3px currentColor">勝</div>
<div class="t" style="left:812px;top:472px;width:37px;height:27px;line-height:27px;color:#ff0000;-webkit-text-stroke:0.3px currentColor">贏</div>
<div class="t" style="left:850px;top:472px;width:55px;height:27px;line-height:27px;color:#ff0000;-webkit-text-stroke:0.3px currentColor">大</div>
<div style="left:0px;top:498px;width:906px;height:28px;background:#efefef"></div>
<div style="left:440px;top:498px;width:150px;height:28px;background:#fdf9f7"></div>
<div style="left:590px;top:498px;width:184px;height:28px;background:#f0f8fc"></div>
<div style="left:0px;top:499px;width:52px;height:27px;background:#cc00cc"></div>
<div class="t" style="left:-1px;top:500px;width:52px;height:27px;line-height:27px;color:#fff">德乙</div>
<div class="t" style="left:53px;top:500px;width:73px;height:27px;line-height:27px;color:#262626;letter-spacing:0.25px">25-10-18</div>
<div class="t" style="left:126px;top:500px;width:88px;height:27px;line-height:27px;"><span style="color:#007800;-webkit-text-stroke:0.2px currentColor">卡尔斯鲁厄</span></div>
<div class="t" style="left:216px;top:500px;width:85px;height:27px;line-height:27px;letter-spacing:0.35px"><span style="color:#ff0000">2-3</span><span style="color:#262626">(0-1)</span></div>
<div class="t" style="left:302px;top:500px;width:38px;height:27px;line-height:27px;color:#262626;letter-spacing:0.3px">7-1</div>
<div class="t" style="left:340px;top:500px;width:99px;height:27px;line-height:27px;"><span style="color:#000;-webkit-text-stroke:0.2px currentColor">凯泽斯劳滕</span></div>
<div class="t" style="left:441px;top:500px;width:38px;height:27px;line-height:27px;color:#262626;letter-spacing:0.3px">0.91</div>
<div class="t" style="left:479px;top:500px;width:71px;height:27px;line-height:27px;color:#222">平手</div>
<div class="t" style="left:552px;top:500px;width:38px;height:27px;line-height:27px;color:#262626;letter-spacing:0.3px">0.97</div>
<div class="t" style="left:591px;top:500px;width:59px;height:27px;line-height:27px;color:#262626;letter-spacing:0.3px">2.44</div>
<div class="t" style="left:651px;top:500px;width:61px;height:27px;line-height:27px;color:#262626;letter-spacing:0.3px">3.57</div>
<div class="t" style="left:713px;top:500px;width:61px;height:27px;line-height:27px;color:#262626;letter-spacing:0.3px">2.64</div>
<div class="t" style="left:774px;top:500px;width:37px;height:27px;line-height:27px;color:#007800;-webkit-text-stroke:0.3px currentColor">負</div>
<div class="t" style="left:812px;top:500px;width:37px;height:27px;line-height:27px;color:#007800;-webkit-text-stroke:0.3px currentColor">輸</div>
<div class="t" style="left:850px;top:500px;width:55px;height:27px;line-height:27px;color:#ff0000;-webkit-text-stroke:0.3px currentColor">大</div>
<div style="left:0px;top:526px;width:906px;height:28px;background:#ffffff"></div>
<div style="left:440px;top:526px;width:150px;height:28px;background:#fdf9f7"></div>
<div style="left:590px;top:526px;width:184px;height:28px;background:#f0f8fc"></div>
<div style="left:0px;top:527px;width:52px;height:27px;background:#cc00cc"></div>
<div class="t" style="left:-1px;top:528px;width:52px;height:27px;line-height:27px;color:#fff">德乙</div>
<div class="t" style="left:53px;top:528px;width:73px;height:27px;line-height:27px;color:#262626;letter-spacing:0.25px">25-10-05</div>
<div class="t" style="left:126px;top:528px;width:88px;height:27px;line-height:27px;"><span style="color:#000;-webkit-text-stroke:0.2px currentColor">特雷斯登</span></div>
<div class="t" style="left:216px;top:528px;width:85px;height:27px;line-height:27px;letter-spacing:0.35px"><span style="color:#ff0000">3-3</span><span style="color:#262626">(1-2)</span></div>
<div class="t" style="left:302px;top:528px;width:38px;height:27px;line-height:27px;color:#262626;letter-spacing:0.3px">3-7</div>
<div class="t" style="left:340px;top:528px;width:99px;height:27px;line-height:27px;"><span style="color:#007800;-webkit-text-stroke:0.2px currentColor">卡尔斯鲁厄</span></div>
<div class="t" style="left:441px;top:528px;width:38px;height:27px;line-height:27px;color:#262626;letter-spacing:0.3px">0.99</div>
<div class="t" style="left:479px;top:528px;width:71px;height:27px;line-height:27px;color:#222">平/半</div>
<div class="t" style="left:552px;top:528px;width:38px;height:27px;line-height:27px;color:#262626;letter-spacing:0.3px">0.89</div>
<div class="t" style="left:591px;top:528px;width:59px;height:27px;line-height:27px;color:#262626;letter-spacing:0.3px">2.16</div>
<div class="t" style="left:651px;top:528px;width:61px;height:27px;line-height:27px;color:#262626;letter-spacing:0.3px">3.60</div>
<div class="t" style="left:713px;top:528px;width:61px;height:27px;line-height:27px;color:#262626;letter-spacing:0.3px">3.05</div>
<div class="t" style="left:774px;top:528px;width:37px;height:27px;line-height:27px;color:#0000ff;-webkit-text-stroke:0.3px currentColor">平</div>
<div class="t" style="left:812px;top:528px;width:37px;height:27px;line-height:27px;color:#ff0000;-webkit-text-stroke:0.3px currentColor">贏</div>
<div class="t" style="left:850px;top:528px;width:55px;height:27px;line-height:27px;color:#ff0000;-webkit-text-stroke:0.3px currentColor">大</div>
<div style="left:0px;top:554px;width:906px;height:28px;background:#efefef"></div>
<div style="left:440px;top:554px;width:150px;height:28px;background:#fdf9f7"></div>
<div style="left:590px;top:554px;width:184px;height:28px;background:#f0f8fc"></div>
<div style="left:0px;top:555px;width:52px;height:27px;background:#cc00cc"></div>
<div class="t" style="left:-1px;top:556px;width:52px;height:27px;line-height:27px;color:#fff">德乙</div>
<div class="t" style="left:53px;top:556px;width:73px;height:27px;line-height:27px;color:#262626;letter-spacing:0.25px">25-09-27</div>
<div class="t" style="left:126px;top:556px;width:88px;height:27px;line-height:27px;"><span style="color:#007800;-webkit-text-stroke:0.2px currentColor">卡尔斯鲁厄</span></div>
<div class="t" style="left:216px;top:556px;width:85px;height:27px;line-height:27px;letter-spacing:0.35px"><span style="color:#ff0000">1-0</span><span style="color:#262626">(0-0)</span></div>
<div class="t" style="left:302px;top:556px;width:38px;height:27px;line-height:27px;color:#262626;letter-spacing:0.3px">8-5</div>
<div class="t" style="left:340px;top:556px;width:99px;height:27px;line-height:27px;"><span style="color:#000;-webkit-text-stroke:0.2px currentColor">马格德堡</span></div>
<div class="t" style="left:441px;top:556px;width:38px;height:27px;line-height:27px;color:#262626;letter-spacing:0.3px">0.84</div>
<div class="t" style="left:479px;top:556px;width:71px;height:27px;line-height:27px;color:#222">平手</div>
<div class="t" style="left:552px;top:556px;width:38px;height:27px;line-height:27px;color:#262626;letter-spacing:0.3px">1.04</div>
<div class="t" style="left:591px;top:556px;width:59px;height:27px;line-height:27px;color:#262626;letter-spacing:0.3px">2.21</div>
<div class="t" style="left:651px;top:556px;width:61px;height:27px;line-height:27px;color:#262626;letter-spacing:0.3px">3.72</div>
<div class="t" style="left:713px;top:556px;width:61px;height:27px;line-height:27px;color:#262626;letter-spacing:0.3px">2.90</div>
<div class="t" style="left:774px;top:556px;width:37px;height:27px;line-height:27px;color:#ff0000;-webkit-text-stroke:0.3px currentColor">勝</div>
<div class="t" style="left:812px;top:556px;width:37px;height:27px;line-height:27px;color:#ff0000;-webkit-text-stroke:0.3px currentColor">贏</div>
<div class="t" style="left:850px;top:556px;width:55px;height:27px;line-height:27px;color:#007800;-webkit-text-stroke:0.3px currentColor">小</div>
<div style="left:0px;top:582px;width:906px;height:28px;background:#ffffff"></div>
<div style="left:440px;top:582px;width:150px;height:28px;background:#fdf9f7"></div>
<div style="left:590px;top:582px;width:184px;height:28px;background:#f0f8fc"></div>
<div style="left:0px;top:583px;width:52px;height:27px;background:#cc00cc"></div>
<div class="t" style="left:-1px;top:584px;width:52px;height:27px;line-height:27px;color:#fff">德乙</div>
<div class="t" style="left:53px;top:584px;width:73px;height:27px;line-height:27px;color:#262626;letter-spacing:0.25px">25-09-21</div>
<div class="t" style="left:126px;top:584px;width:88px;height:27px;line-height:27px;"><span style="color:#000;-webkit-text-stroke:0.2px currentColor">荷尔斯泰因</span></div>
<div class="t" style="left:216px;top:584px;width:85px;height:27px;line-height:27px;letter-spacing:0.35px"><span style="color:#ff0000">3-0</span><span style="color:#262626">(2-0)</span></div>
<div class="t" style="left:302px;top:584px;width:38px;height:27px;line-height:27px;color:#262626;letter-spacing:0.3px">4-5</div>
<div class="t" style="left:340px;top:584px;width:99px;height:27px;line-height:27px;"><span style="color:#007800;-webkit-text-stroke:0.2px currentColor">卡尔斯鲁厄</span></div>
<div class="t" style="left:441px;top:584px;width:38px;height:27px;line-height:27px;color:#262626;letter-spacing:0.3px">0.95</div>
<div class="t" style="left:479px;top:584px;width:71px;height:27px;line-height:27px;color:#222">半球</div>
<div class="t" style="left:552px;top:584px;width:38px;height:27px;line-height:27px;color:#262626;letter-spacing:0.3px">0.93</div>
<div class="t" style="left:591px;top:584px;width:59px;height:27px;line-height:27px;color:#262626;letter-spacing:0.3px">2.01</div>
<div class="t" style="left:651px;top:584px;width:61px;height:27px;line-height:27px;color:#262626;letter-spacing:0.3px">3.58</div>
<div class="t" style="left:713px;top:584px;width:61px;height:27px;line-height:27px;color:#262626;letter-spacing:0.3px">3.41</div>
<div class="t" style="left:774px;top:584px;width:37px;height:27px;line-height:27px;color:#007800;-webkit-text-stroke:0.3px currentColor">負</div>
<div class="t" style="left:812px;top:584px;width:37px;height:27px;line-height:27px;color:#007800;-webkit-text-stroke:0.3px currentColor">輸</div>
<div class="t" style="left:850px;top:584px;width:55px;height:27px;line-height:27px;color:#ff0000;-webkit-text-stroke:0.3px currentColor">大</div>
<div style="left:0px;top:610px;width:906px;height:28px;background:#efefef"></div>
<div style="left:440px;top:610px;width:150px;height:28px;background:#fdf9f7"></div>
<div style="left:590px;top:610px;width:184px;height:28px;background:#f0f8fc"></div>
<div style="left:0px;top:611px;width:52px;height:27px;background:#cc00cc"></div>
<div class="t" style="left:-1px;top:612px;width:52px;height:27px;line-height:27px;color:#fff">德乙</div>
<div class="t" style="left:53px;top:612px;width:73px;height:27px;line-height:27px;color:#262626;letter-spacing:0.25px">25-09-13</div>
<div class="t" style="left:126px;top:612px;width:88px;height:27px;line-height:27px;"><span style="color:#007800;-webkit-text-stroke:0.2px currentColor">卡尔斯鲁厄</span></div>
<div class="t" style="left:216px;top:612px;width:85px;height:27px;line-height:27px;letter-spacing:0.35px"><span style="color:#ff0000">2-1</span><span style="color:#262626">(1-1)</span></div>
<div class="t" style="left:302px;top:612px;width:38px;height:27px;line-height:27px;color:#262626;letter-spacing:0.3px">6-10</div>
<div class="t" style="left:340px;top:612px;width:99px;height:27px;line-height:27px;"><span style="color:#000;-webkit-text-stroke:0.2px currentColor">纽伦堡</span></div>
<div class="t" style="left:441px;top:612px;width:38px;height:27px;line-height:27px;color:#262626;letter-spacing:0.3px">0.86</div>
<div class="t" style="left:479px;top:612px;width:71px;height:27px;line-height:27px;color:#222">平/半</div>
<div class="t" style="left:552px;top:612px;width:38px;height:27px;line-height:27px;color:#262626;letter-spacing:0.3px">1.03</div>
<div class="t" style="left:591px;top:612px;width:59px;height:27px;line-height:27px;color:#262626;letter-spacing:0.3px">1.97</div>
<div class="t" style="left:651px;top:612px;width:61px;height:27px;line-height:27px;color:#262626;letter-spacing:0.3px">3.64</div>
<div class="t" style="left:713px;top:612px;width:61px;height:27px;line-height:27px;color:#262626;letter-spacing:0.3px">3.49</div>
<div class="t" style="left:774px;top:612px;width:37px;height:27px;line-height:27px;color:#ff0000;-webkit-text-stroke:0.3px currentColor">勝</div>
<div class="t" style="left:812px;top:612px;width:37px;height:27px;line-height:27px;color:#ff0000;-webkit-text-stroke:0.3px currentColor">贏</div>
<div class="t" style="left:850px;top:612px;width:55px;height:27px;line-height:27px;color:#0000ff;-webkit-text-stroke:0.3px currentColor">走</div>
<div style="left:0px;top:638px;width:906px;height:28px;background:#ffffff"></div>
<div style="left:440px;top:638px;width:150px;height:28px;background:#fdf9f7"></div>
<div style="left:590px;top:638px;width:184px;height:28px;background:#f0f8fc"></div>
<div style="left:0px;top:639px;width:52px;height:27px;background:#cc00cc"></div>
<div class="t" style="left:-1px;top:640px;width:52px;height:27px;line-height:27px;color:#fff">德乙</div>
<div class="t" style="left:53px;top:640px;width:73px;height:27px;line-height:27px;color:#262626;letter-spacing:0.25px">25-08-31</div>
<div class="t" style="left:126px;top:640px;width:88px;height:27px;line-height:27px;"><span style="color:#000;-webkit-text-stroke:0.2px currentColor">杜塞尔多夫</span></div>
<div class="t" style="left:216px;top:640px;width:85px;height:27px;line-height:27px;letter-spacing:0.35px"><span style="color:#ff0000">0-0</span><span style="color:#262626">(0-0)</span></div>
<div class="t" style="left:302px;top:640px;width:38px;height:27px;line-height:27px;color:#262626;letter-spacing:0.3px">4-2</div>
<div class="t" style="left:340px;top:640px;width:99px;height:27px;line-height:27px;"><span style="color:#007800;-webkit-text-stroke:0.2px currentColor">卡尔斯鲁厄</span></div>
<div class="t" style="left:441px;top:640px;width:38px;height:27px;line-height:27px;color:#262626;letter-spacing:0.3px">1.06</div>
<div class="t" style="left:479px;top:640px;width:71px;height:27px;line-height:27px;color:#222">平/半</div>
<div class="t" style="left:552px;top:640px;width:38px;height:27px;line-height:27px;color:#262626;letter-spacing:0.3px">0.83</div>
<div class="t" style="left:591px;top:640px;width:59px;height:27px;line-height:27px;color:#262626;letter-spacing:0.3px">2.23</div>
<div class="t" style="left:651px;top:640px;width:61px;height:27px;line-height:27px;color:#262626;letter-spacing:0.3px">3.65</div>
<div class="t" style="left:713px;top:640px;width:61px;height:27px;line-height:27px;color:#262626;letter-spacing:0.3px">2.90</div>
<div class="t" style="left:774px;top:640px;width:37px;height:27px;line-height:27px;color:#0000ff;-webkit-text-stroke:0.3px currentColor">平</div>
<div class="t" style="left:812px;top:640px;width:37px;height:27px;line-height:27px;color:#ff0000;-webkit-text-stroke:0.3px currentColor">贏</div>
<div class="t" style="left:850px;top:640px;width:55px;height:27px;line-height:27px;color:#007800;-webkit-text-stroke:0.3px currentColor">小</div>
<div style="left:0px;top:666px;width:906px;height:28px;background:#efefef"></div>
<div style="left:440px;top:666px;width:150px;height:28px;background:#fdf9f7"></div>
<div style="left:590px;top:666px;width:184px;height:28px;background:#f0f8fc"></div>
<div style="left:0px;top:667px;width:52px;height:27px;background:#cc00cc"></div>
<div class="t" style="left:-1px;top:668px;width:52px;height:27px;line-height:27px;color:#fff">德乙</div>
<div class="t" style="left:53px;top:668px;width:73px;height:27px;line-height:27px;color:#262626;letter-spacing:0.25px">25-08-23</div>
<div class="t" style="left:126px;top:668px;width:88px;height:27px;line-height:27px;"><span style="color:#007800;-webkit-text-stroke:0.2px currentColor">卡尔斯鲁厄</span></div>
<div class="t" style="left:216px;top:668px;width:85px;height:27px;line-height:27px;letter-spacing:0.35px"><span style="color:#ff0000">2-0</span><span style="color:#262626">(1-0)</span></div>
<div class="t" style="left:302px;top:668px;width:38px;height:27px;line-height:27px;color:#262626;letter-spacing:0.3px">5-2</div>
<div class="t" style="left:340px;top:668px;width:99px;height:27px;line-height:27px;"><span style="color:#000;-webkit-text-stroke:0.2px currentColor">布轮斯维克<span class="bd">1</span></span></div>
<div class="t" style="left:441px;top:668px;width:38px;height:27px;line-height:27px;color:#262626;letter-spacing:0.3px">1.06</div>
<div class="t" style="left:479px;top:668px;width:71px;height:27px;line-height:27px;color:#222">半/一</div>
<div class="t" style="left:552px;top:668px;width:38px;height:27px;line-height:27px;color:#262626;letter-spacing:0.3px">0.83</div>
<div class="t" style="left:591px;top:668px;width:59px;height:27px;line-height:27px;color:#262626;letter-spacing:0.3px">1.79</div>
<div class="t" style="left:651px;top:668px;width:61px;height:27px;line-height:27px;color:#262626;letter-spacing:0.3px">3.87</div>
<div class="t" style="left:713px;top:668px;width:61px;height:27px;line-height:27px;color:#262626;letter-spacing:0.3px">3.95</div>
<div class="t" style="left:774px;top:668px;width:37px;height:27px;line-height:27px;color:#ff0000;-webkit-text-stroke:0.3px currentColor">勝</div>
<div class="t" style="left:812px;top:668px;width:37px;height:27px;line-height:27px;color:#ff0000;-webkit-text-stroke:0.3px currentColor">贏</div>
<div class="t" style="left:850px;top:668px;width:55px;height:27px;line-height:27px;color:#007800;-webkit-text-stroke:0.3px currentColor">小</div>
<div style="left:0px;top:694px;width:906px;height:28px;background:#ffffff"></div>
<div style="left:440px;top:694px;width:150px;height:28px;background:#fdf9f7"></div>
<div style="left:590px;top:694px;width:184px;height:28px;background:#f0f8fc"></div>
<div style="left:0px;top:695px;width:52px;height:27px;background:#a20000"></div>
<div class="t" style="left:-1px;top:696px;width:52px;height:27px;line-height:27px;color:#fff">德国杯</div>
<div class="t" style="left:53px;top:696px;width:73px;height:27px;line-height:27px;color:#262626;letter-spacing:0.25px">25-08-17</div>
<div class="t" style="left:126px;top:696px;width:88px;height:27px;line-height:27px;"><span style="color:#000;-webkit-text-stroke:0.2px currentColor">马瑟维兹英</span></div>
<div class="t" style="left:216px;top:696px;width:85px;height:27px;line-height:27px;letter-spacing:0.35px"><span style="color:#ff0000">0-5</span><span style="color:#262626">(0-3)</span></div>
<div class="t" style="left:302px;top:696px;width:38px;height:27px;line-height:27px;color:#262626;letter-spacing:0.3px">1-7</div>
<div class="t" style="left:340px;top:696px;width:99px;height:27px;line-height:27px;"><span style="color:#007800;-webkit-text-stroke:0.2px currentColor">卡尔斯鲁厄</span></div>
<div class="t" style="left:441px;top:696px;width:38px;height:27px;line-height:27px;color:#262626;letter-spacing:0.3px">1.09</div>
<div class="t" style="left:479px;top:696px;width:71px;height:27px;line-height:27px;color:#222"><span style="color:#ff0000">*</span>球半/两</div>
<div class="t" style="left:552px;top:696px;width:38px;height:27px;line-height:27px;color:#262626;letter-spacing:0.3px">0.73</div>
<div class="t" style="left:591px;top:696px;width:59px;height:27px;line-height:27px;color:#262626;letter-spacing:0.3px">9.69</div>
<div class="t" style="left:651px;top:696px;width:61px;height:27px;line-height:27px;color:#262626;letter-spacing:0.3px">6.22</div>
<div class="t" style="left:713px;top:696px;width:61px;height:27px;line-height:27px;color:#262626;letter-spacing:0.3px">1.23</div>
<div class="t" style="left:774px;top:696px;width:37px;height:27px;line-height:27px;color:#ff0000;-webkit-text-stroke:0.3px currentColor">勝</div>
<div class="t" style="left:812px;top:696px;width:37px;height:27px;line-height:27px;color:#ff0000;-webkit-text-stroke:0.3px currentColor">贏</div>
<div class="t" style="left:850px;top:696px;width:55px;height:27px;line-height:27px;color:#ff0000;-webkit-text-stroke:0.3px currentColor">大</div>
<div style="left:0px;top:722px;width:906px;height:28px;background:#efefef"></div>
<div style="left:440px;top:722px;width:150px;height:28px;background:#fdf9f7"></div>
<div style="left:590px;top:722px;width:184px;height:28px;background:#f0f8fc"></div>
<div style="left:0px;top:723px;width:52px;height:27px;background:#cc00cc"></div>
<div class="t" style="left:-1px;top:724px;width:52px;height:27px;line-height:27px;color:#fff">德乙</div>
<div class="t" style="left:53px;top:724px;width:73px;height:27px;line-height:27px;color:#262626;letter-spacing:0.25px">25-08-10</div>
<div class="t" style="left:126px;top:724px;width:88px;height:27px;line-height:27px;"><span style="color:#000;-webkit-text-stroke:0.2px currentColor">柏林赫塔</span></div>
<div class="t" style="left:216px;top:724px;width:85px;height:27px;line-height:27px;letter-spacing:0.35px"><span style="color:#ff0000">0-0</span><span style="color:#262626">(0-0)</span></div>
<div class="t" style="left:302px;top:724px;width:38px;height:27px;line-height:27px;color:#262626;letter-spacing:0.3px">5-10</div>
<div class="t" style="left:340px;top:724px;width:99px;height:27px;line-height:27px;"><span style="color:#007800;-webkit-text-stroke:0.2px currentColor">卡尔斯鲁厄</span></div>
<div class="t" style="left:441px;top:724px;width:38px;height:27px;line-height:27px;color:#262626;letter-spacing:0.3px">0.87</div>
<div class="t" style="left:479px;top:724px;width:71px;height:27px;line-height:27px;color:#222">半球</div>
<div class="t" style="left:552px;top:724px;width:38px;height:27px;line-height:27px;color:#262626;letter-spacing:0.3px">1.02</div>
<div class="t" style="left:591px;top:724px;width:59px;height:27px;line-height:27px;color:#262626;letter-spacing:0.3px">1.79</div>
<div class="t" style="left:651px;top:724px;width:61px;height:27px;line-height:27px;color:#262626;letter-spacing:0.3px">3.87</div>
<div class="t" style="left:713px;top:724px;width:61px;height:27px;line-height:27px;color:#262626;letter-spacing:0.3px">3.88</div>
<div class="t" style="left:774px;top:724px;width:37px;height:27px;line-height:27px;color:#0000ff;-webkit-text-stroke:0.3px currentColor">平</div>
<div class="t" style="left:812px;top:724px;width:37px;height:27px;line-height:27px;color:#ff0000;-webkit-text-stroke:0.3px currentColor">贏</div>
<div class="t" style="left:850px;top:724px;width:55px;height:27px;line-height:27px;color:#007800;-webkit-text-stroke:0.3px currentColor">小</div>
<div class="t" style="left:-1px;top:430px;width:52px;height:40px;line-height:40px;color:#333">类型</div>
<div class="t" style="left:52px;top:430px;width:73px;height:40px;line-height:40px;color:#333">日期</div>
<div class="t" style="left:126px;top:430px;width:88px;height:40px;line-height:40px;color:#333">主场</div>
<div class="t" style="left:215px;top:430px;width:85px;height:40px;line-height:40px;color:#333">比分(半场)</div>
<div class="t" style="left:301px;top:430px;width:38px;height:40px;line-height:40px;color:#333">角球</div>
<div class="t" style="left:340px;top:430px;width:99px;height:40px;line-height:40px;color:#333">客场</div>
<div class="t" style="left:440px;top:455px;width:38px;height:17px;line-height:17px;color:#333">主</div>
<div class="t" style="left:479px;top:455px;width:71px;height:17px;line-height:17px;color:#333">盘口</div>
<div class="t" style="left:551px;top:455px;width:38px;height:17px;line-height:17px;color:#333">客</div>
<div class="t" style="left:590px;top:455px;width:59px;height:17px;line-height:17px;color:#333">主</div>
<div class="t" style="left:650px;top:455px;width:61px;height:17px;line-height:17px;color:#333">和</div>
<div class="t" style="left:712px;top:455px;width:61px;height:17px;line-height:17px;color:#333">客</div>
<div class="t" style="left:774px;top:455px;width:37px;height:17px;line-height:17px;color:#333">胜负</div>
<div class="t" style="left:812px;top:455px;width:37px;height:17px;line-height:17px;color:#333">让球</div>
<div class="t" style="left:850px;top:455px;width:55px;height:17px;line-height:17px;color:#333">进球数</div>
<div class="sel" style="left:465px;top:431px;width:57px;height:20px;line-height:18px">Crow*<i class="arr"></i></div>
<div class="sel" style="left:532px;top:431px;width:35px;height:20px;line-height:18px">终<i class="arr"></i></div>
<div class="sel" style="left:618px;top:431px;width:84px;height:20px;line-height:18px">胜平负均值<i class="arr"></i></div>
<div class="sel" style="left:710px;top:431px;width:36px;height:20px;line-height:18px">终<i class="arr"></i></div>
<div class="sel" style="left:818px;top:431px;width:47px;height:20px;line-height:18px">全场<i class="arr"></i></div>
<div style="left:0px;top:429px;width:906px;height:1px;background:#bdbdbd"></div>
<div style="left:0px;top:470px;width:906px;height:1px;background:#bdbdbd"></div>
<div style="left:440px;top:452px;width:466px;height:1px;background:#bdbdbd"></div>
<div style="left:0px;top:498px;width:906px;height:1px;background:#bdbdbd"></div>
<div style="left:0px;top:526px;width:906px;height:1px;background:#bdbdbd"></div>
<div style="left:0px;top:554px;width:906px;height:1px;background:#bdbdbd"></div>
<div style="left:0px;top:582px;width:906px;height:1px;background:#bdbdbd"></div>
<div style="left:0px;top:610px;width:906px;height:1px;background:#bdbdbd"></div>
<div style="left:0px;top:638px;width:906px;height:1px;background:#bdbdbd"></div>
<div style="left:0px;top:666px;width:906px;height:1px;background:#bdbdbd"></div>
<div style="left:0px;top:694px;width:906px;height:1px;background:#bdbdbd"></div>
<div style="left:0px;top:722px;width:906px;height:1px;background:#bdbdbd"></div>
<div style="left:0px;top:750px;width:906px;height:1px;background:#bdbdbd"></div>
<div style="left:52px;top:429px;width:1px;height:322px;background:#bdbdbd"></div>
<div style="left:126px;top:429px;width:1px;height:322px;background:#bdbdbd"></div>
<div style="left:215px;top:429px;width:1px;height:322px;background:#bdbdbd"></div>
<div style="left:301px;top:429px;width:1px;height:322px;background:#bdbdbd"></div>
<div style="left:340px;top:429px;width:1px;height:322px;background:#bdbdbd"></div>
<div style="left:440px;top:429px;width:1px;height:322px;background:#bdbdbd"></div>
<div style="left:590px;top:429px;width:1px;height:322px;background:#bdbdbd"></div>
<div style="left:774px;top:429px;width:1px;height:322px;background:#bdbdbd"></div>
<div style="left:479px;top:452px;width:1px;height:299px;background:#bdbdbd"></div>
<div style="left:551px;top:452px;width:1px;height:299px;background:#bdbdbd"></div>
<div style="left:650px;top:452px;width:1px;height:299px;background:#bdbdbd"></div>
<div style="left:712px;top:452px;width:1px;height:299px;background:#bdbdbd"></div>
<div style="left:812px;top:452px;width:1px;height:299px;background:#bdbdbd"></div>
<div style="left:850px;top:452px;width:1px;height:299px;background:#bdbdbd"></div>
</body></html>
